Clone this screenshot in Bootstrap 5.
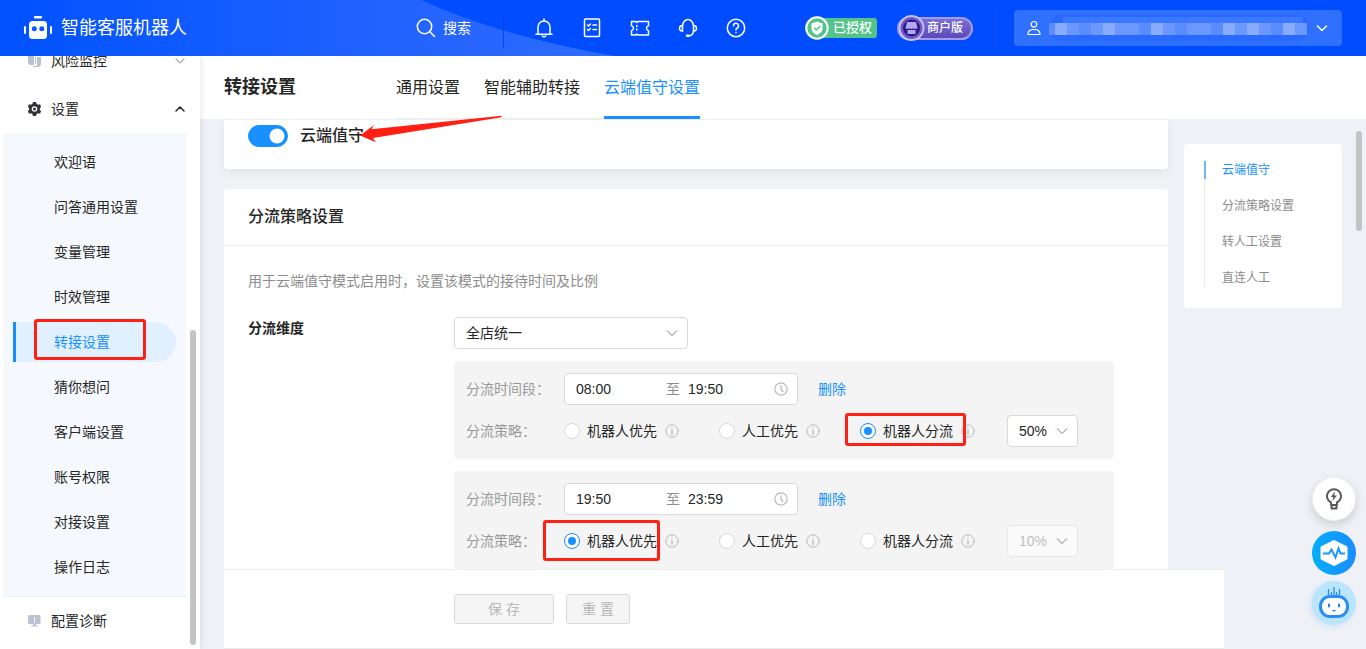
<!DOCTYPE html>
<html lang="zh-CN">
<head>
<meta charset="utf-8">
<meta name="viewport" content="width=device-width, initial-scale=1">
<title>智能客服机器人 - 转接设置</title>
<link href="https://cdn.jsdelivr.net/npm/bootstrap@5.3.0/dist/css/bootstrap.min.css" rel="stylesheet">
<style>
  :root { --brand: #1890ff; --callout: #ff2013; --ink: #262626; --mute: #999; }
  body { font-family: "Liberation Sans", "Noto Sans CJK SC", sans-serif; font-size: 14px; line-height: 20px; color: var(--ink); background: #eff1f6; }
  a { color: var(--brand); text-decoration: none; }
  svg { display: block; flex: none; }
  .line-icon { fill: none; stroke: currentColor; stroke-width: 1.5; stroke-linecap: round; stroke-linejoin: round; }
  .icon-thin { stroke-width: 1.2; }

  /* top bar */
  .topbar { height: 56px; background: #004dff; color: #fff; }
  .topbar-art { left: 0; top: 0; z-index: 0; }
  .topbar > * { z-index: 1; }
  .brand-link { gap: 9px; }
  .brand-name { font-size: 18px; line-height: 24px; color: #fff; }
  .tool-btn { width: 48px; height: 40px; color: #fff; }
  .tools { width: 282px; border-left: 1px solid #0a46e4; border-right: 1px solid #0a46e4; height: 40px; padding-left: 16px; }
  .search-btn { width: 87px; gap: 7px; font-size: 14px; color: #fff; }
  .badges { width: 209px; height: 40px; padding-left: 20px; border-right: 1px solid #0a46e4; }
  .tag { height: 20px; font-size: 13px; font-weight: 500; padding-left: 28px; color: #fff; }
  .tag svg { left: 0; top: 50%; transform: translateY(-50%); }
  .tag-ok { width: 72px; background: #52c48a; border-radius: 12px 4px 4px 12px; }
  .tag-shop { width: 76px; height: 23px; padding-left: 28px; background: linear-gradient(#7b6fd6, #5b4ab8); border: 2px solid #a79ae8; border-radius: 12px; font-size: 12px; }
  .account { width: 328px; height: 36px; background: #2f70ff; border-radius: 4px; color: #fff; padding: 0 14px 0 12px; margin: 0 24px 0 20px; }

  /* side menu */
  .sidebar { width: 200px; background: #fff; box-shadow: 2px 0 6px rgba(0,21,41,.08); z-index: 2; }
  .side-row { height: 48px; padding: 0 14px 0 28px; gap: 10px; color: var(--ink); }
  .side-row .chev-off { color: #b0b0b0; }
  .submenu { margin: 0 14px 0 3px; padding: 9px 10px; background: #f5f9fd; border-bottom: 1px solid #e6eefb; gap: 5px; }
  .submenu a { height: 40px; padding-left: 38px; border-left: 3px solid transparent; color: var(--ink); }
  .submenu a.active { background: #e1f0ff; border-left-color: var(--brand); border-radius: 0 20px 20px 0; color: var(--brand); }
  .thumb { width: 6px; border-radius: 3px; background: #c4c4c4; }
  .thumb-side { right: 4px; top: 274px; bottom: 4px; }
  .thumb-main { right: 4px; top: 75px; height: 100px; }

  /* page head */
  .page-head { height: 63px; background: #fff; padding: 0 24px; z-index: 1; }
  .page-head h1 { width: 172px; font-size: 18px; line-height: 62px; font-weight: 700; }
  .tabs { gap: 24px; box-shadow: inset 0 -1px #ececec; }
  .tabs a { padding-top: 4px; font-size: 16px; line-height: 56px; border-bottom: 3px solid transparent; color: var(--ink); }
  .tabs a.active { color: var(--brand); border-color: var(--brand); }

  /* content */
  .stack { gap: 20px; background: #f1f2f4; }
  .panel { background: #fff; border-radius: 4px; }
  .panel-first { border-top: 1px solid #eceef2; border-radius: 0 0 4px 4px; padding: 4px 24px 21px; box-shadow: 0 4px 10px rgba(0,0,0,.06); }
  .panel-title { font-size: 16px; line-height: 24px; font-weight: 500; }
  .panel-top { padding: 16px 24px; border-bottom: 1px solid #ececec; }
  .panel-main { padding: 25px 24px 24px; }
  .hint { margin: 0 0 26px; color: #8c8c8c; }
  .form-check-input { box-shadow: none !important; flex: none; }
  .switch { width: 40px !important; height: 22px; }
  .switch:checked { background-color: var(--brand); border-color: var(--brand); }
  .label-col { width: 206px; font-weight: 700; line-height: 22px; flex: none; }
  .rules { max-width: 660px; gap: 12px; }
  .rule { background: #f4f4f4; border-radius: 4px; padding: 12px; gap: 10px; }
  .rule-label { width: 98px; color: var(--mute); flex: none; }
  .pick { height: 32px; font-size: 14px; line-height: 20px; padding: 0 30px 0 11px; border-color: #d9d9d9; border-radius: 4px; color: var(--ink);
    background-size: 12px; background-position: right 9px center;
    background-image: url("data:image/svg+xml,%3csvg xmlns='http://www.w3.org/2000/svg' viewBox='0 0 12 12'%3e%3cpath fill='none' stroke='%23b8b8b8' stroke-width='1.3' d='M1 3.5l5 5 5-5'/%3e%3c/svg%3e"); }
  .pick:disabled { background-color: #fafafa; border-color: #e8e8e8; color: #bfbfbf; opacity: 1; }
  .pick-wide, .range { width: 234px; }
  .pick-rate { width: 71px; }
  .range { height: 32px; background: #fff; border: 1px solid #d9d9d9; border-radius: 4px; padding: 0 9px 0 11px; margin-right: 20px; color: #b8b8b8; }
  .range input { width: 90px; border: 0; padding: 0; outline: 0; color: var(--ink); background: none; }
  .range span { width: 22px; color: #8c8c8c; }
  .range input + span + input { width: 86px; }
  .choice { gap: 7px; margin-right: 40px; }
  .choice + .choice + .choice { margin-right: 32px; }
  .choice .form-check-input { width: 16px; height: 16px; border-color: #d9d9d9; background-color: #fff; }
  .choice .form-check-input:checked { border-color: var(--brand);
    background-image: url("data:image/svg+xml,%3csvg xmlns='http://www.w3.org/2000/svg' viewBox='0 0 14 14'%3e%3ccircle cx='7' cy='7' r='4' fill='%231890ff'/%3e%3c/svg%3e"); }
  .info { color: #b8b8b8; margin-left: 1px; }

  /* jump list */
  .jump { width: 158px; margin-top: 25px; padding: 17px 20px 21px; font-size: 12px; line-height: 18px; }
  .jump ul { gap: 18px; border-left: 1px solid #e8e8e8; }
  .jump a { display: block; padding-left: 17px; color: #8c8c8c; }
  .jump a.active { color: var(--brand); box-shadow: -1px 0 #6cb8ff, inset 1px 0 #6cb8ff; }

  /* action bar */
  .actions { height: 80px; margin: 0 142px 0 24px; padding-left: 230px; background: #fff; border-top: 1px solid #ececec; border-bottom: 1px solid #ececec; gap: 12px; }
  .act { height: 30px; width: 64px; padding: 0; font-size: 14px; line-height: 20px; border-radius: 3px; }
  .act:disabled { background: #f5f5f5; border-color: #d9d9d9; color: #b8b8b8; opacity: 1; }
  .act-save { width: 100px; }

  /* floating helpers */
  .helpers { right: 10px; bottom: 24px; gap: 6px; z-index: 4; }
  .helper { width: 44px; height: 44px; border: 0; padding: 0; }
  .helper-tip { background: #fff; color: #595959; border: 1px solid #eee; box-shadow: 0 4px 10px rgba(0,0,0,.15); margin-bottom: 4px; }
  .helper-pulse { background: linear-gradient(90deg, #03aefb, #1b8cff); }
  .helper-bot { background: #b9e5ff; box-shadow: -2px 2px 6px rgba(24,144,255,.15); }

  /* red callouts */
  .callout { border: 3px solid var(--callout); border-radius: 3px; pointer-events: none; z-index: 3; }
  .callout-menu { left: 18px; top: -3px; width: 112px; height: 41px; }
  .callout-split { left: -15px; top: -8px; width: 121px; height: 33px; }
  .callout-robot { left: -21px; top: -11px; width: 117px; height: 41px; }
  .arrow { left: 160px; top: 59px; z-index: 3; }
</style>
</head>
<body class="vh-100 d-flex flex-column overflow-hidden">

<header class="topbar position-relative d-flex align-items-center flex-shrink-0">
  <svg class="topbar-art position-absolute" width="620" height="56" aria-hidden="true">
    <defs><linearGradient id="sweep"><stop offset="0" stop-color="#0052ff"/><stop offset=".65" stop-color="#2263ff"/><stop offset="1" stop-color="#2e6cff"/></linearGradient></defs>
    <path d="M0 0H421Q503 37 614 56H0Z" fill="url(#sweep)"/>
  </svg>
  <a href="#" class="brand-link position-relative d-flex align-items-center flex-grow-1 ps-4">
    <svg width="28" height="24" viewBox="0 0 28 24" fill="#fff"><rect x="10" y="0" width="8" height="2.4" rx="1"/><rect x="5" y="5" width="18" height="18" rx="3.5"/><rect x="0" y="10" width="2" height="8" rx="1"/><rect x="26" y="10" width="2" height="8" rx="1"/><circle cx="10.3" cy="12.7" r="2.5" fill="#0d57ff"/><circle cx="17.8" cy="12.7" r="2.5" fill="#0d57ff"/></svg>
    <span class="brand-name">智能客服机器人</span>
  </a>
  <button class="search-btn btn border-0 p-0 position-relative d-flex align-items-center" type="button">
    <svg class="line-icon" width="20" height="20" viewBox="0 0 20 20"><circle cx="8.5" cy="8.5" r="7.2"/><path d="M14 14l4.500 4.500"/></svg>搜索
  </button>
  <div class="tools position-relative d-flex align-items-center">
    <button class="tool-btn btn border-0 p-0 d-flex align-items-center justify-content-center" type="button" aria-label="通知"><svg class="line-icon" width="20" height="20" viewBox="0 0 20 20"><path d="M4 16V9a6 6 0 0 1 12 0v7M2 16.3h16M10 1v1.5M8.3 18q1.7 1.4 3.4 0"/></svg></button>
    <button class="tool-btn btn border-0 p-0 d-flex align-items-center justify-content-center" type="button" aria-label="任务"><svg class="line-icon" width="20" height="20" viewBox="0 0 20 20"><rect x="2.500" y="1" width="15" height="17.500" rx="1"/><path d="M5.500 7l1 1 2-2M5.500 11.500l1 1 2-2M11 7h3.500M11 11.500h3.500"/></svg></button>
    <button class="tool-btn btn border-0 p-0 d-flex align-items-center justify-content-center" type="button" aria-label="卡券"><svg class="line-icon" width="20" height="20" viewBox="0 0 20 20"><path d="M1.500 3.500h4.300l1 1 1-1h10.700v4.200q-2 .5-2 2.500t2 2.500v4.300H7.800l-1-1-1 1H1.500v-4.300q2-.5 2-2.500t-2-2.500z"/><path stroke-dasharray="1 2.500" d="M6.800 7.500v6.500"/></svg></button>
    <button class="tool-btn btn border-0 p-0 d-flex align-items-center justify-content-center" type="button" aria-label="客服"><svg class="line-icon" width="20" height="20" viewBox="0 0 20 20"><path d="M4.500 13V8a5.500 6.500 0 0 1 11 0v5c0 2.500-2 4.500-4.500 4.800"/><path d="M4.500 7.500Q1.500 7.500 1.500 10.300T4.500 13M15.500 7.500q3 0 3 2.800t-3 2.700"/><path stroke-width="2.400" d="M9 17.800h1.500"/></svg></button>
    <button class="tool-btn btn border-0 p-0 d-flex align-items-center justify-content-center" type="button" aria-label="帮助"><svg class="line-icon" width="20" height="20" viewBox="0 0 20 20"><circle cx="10" cy="10" r="8.700"/><path d="M7.500 7.800a2.500 2.500 0 1 1 3.700 2.200q-1.200.7-1.200 2M10 14.600v.2"/></svg></button>
  </div>
  <div class="badges position-relative d-flex align-items-center">
    <span class="tag tag-ok position-relative d-flex align-items-center me-3">
      <svg class="position-absolute" width="24" height="24" viewBox="0 0 24 24"><circle cx="12" cy="12" r="10.700" fill="#52c48a" stroke="#fff" stroke-width="2"/><path d="M12 5.500l5.500 2v5q0 4-5.500 6.500-5.500-2.500-5.500-6.500v-5z" fill="#fff"/><path d="M9 11.800l2.200 2.200 4-4" fill="none" stroke="#52c48a" stroke-width="1.500"/></svg>已授权
    </span>
    <span class="tag tag-shop position-relative d-flex align-items-center ms-1">
      <svg class="position-absolute" width="28" height="28" viewBox="0 0 28 28"><circle cx="12.500" cy="14" r="12" fill="#6b58c9" stroke="#c9c0f5" stroke-width="2"/><circle cx="12.500" cy="14" r="8.500" fill="#2c1a85"/><path d="M8 8h9l1.500 6q-1 1.700-2.300.3-1.200 1.500-2.400 0-1.300 1.500-2.600 0-1.200 1.500-2.400 0-1.300 1.400-2.300-.3zM8.500 16h8v4h-8z" fill="#b5a8f2"/></svg>商户版
    </span>
  </div>
  <button class="account btn border-0 position-relative d-flex align-items-center justify-content-between" type="button" aria-label="账号">
    <svg class="line-icon icon-thin" width="16" height="16" viewBox="0 0 16 16"><circle cx="8" cy="4.300" r="2.800"/><path d="M2 14.500q-.3-5 6-5t6 5z"/></svg>
    <svg width="260" height="28" viewBox="0 0 260 28" aria-hidden="true">
      <rect x="0" y="1" width="260" height="26" rx="13" fill="#2869ff"/><rect x="14" y="3" width="240" height="6" fill="#3b77ff"/>
      <g><rect x="0" y="9" width="258" height="12" fill="#6a98ff"/><path fill="#88acff" d="M6 9h12v12H6zM54 9h12v12H54zM102 9h12v12h-12zM174 9h12v12h-12zM198 9h12v12h-12zM234 9h12v12h-12z"/><path fill="#5a8cff" d="M0 9h6v12H0zM30 9h12v12H30zM90 9h12v12H90zM126 9h12v12h-12zM162 9h12v12h-12zM222 9h12v12h-12z"/></g>
    </svg>
    <svg class="line-icon" width="12" height="12" viewBox="0 0 12 12"><path d="M1.500 4L6 8.500 10.500 4"/></svg>
  </button>
</header>

<div class="d-flex flex-grow-1 overflow-hidden">
  <nav class="sidebar position-relative d-flex flex-column justify-content-end flex-shrink-0 overflow-hidden pb-1" aria-label="主菜单">
    <a href="#" class="side-row d-flex align-items-center flex-shrink-0">
      <svg width="13" height="14" viewBox="0 0 13 14"><path fill="#b9c2d1" d="M0 1h6v10H2L0 9zM7 3h1v7H7zM9 3h4v8l-2 2H5v-1h4z"/></svg>
      <span>风险监控</span>
      <svg class="line-icon icon-thin chev-off ms-auto" width="12" height="12" viewBox="0 0 12 12"><path d="M2 4l4 4 4-4"/></svg>
    </a>
    <a href="#" class="side-row d-flex align-items-center flex-shrink-0">
      <svg width="13" height="14" viewBox="0 0 13 14"><path fill="#303238" fill-rule="evenodd" d="M5 0h3l.6 2 1.500.8 2-.5L13 5l-1.200 1.400v1.200L13 9l-.9 2.700-2-.5-1.500.8L8 14H5l-.6-2-1.500-.8-2 .5L0 9l1.200-1.400V6.400L0 5l.9-2.700 2 .5L4.400 2zM6.500 4.200a2.800 2.800 0 1 0 0 5.600 2.800 2.800 0 0 0 0-5.600zm0 1.300a1.500 1.500 0 1 1 0 3 1.500 1.500 0 0 1 0-3z"/></svg>
      <span class="open-group">设置</span>
      <svg class="line-icon ms-auto" width="12" height="12" viewBox="0 0 12 12"><path d="M2 8l4-4 4 4"/></svg>
    </a>
    <div class="submenu d-flex flex-column flex-shrink-0">
      <a href="#" class="d-flex align-items-center">欢迎语</a>
      <a href="#" class="d-flex align-items-center">问答通用设置</a>
      <a href="#" class="d-flex align-items-center">变量管理</a>
      <a href="#" class="d-flex align-items-center">时效管理</a>
      <a href="#" class="active d-flex align-items-center position-relative">转接设置<span class="callout callout-menu position-absolute"></span></a>
      <a href="#" class="d-flex align-items-center">猜你想问</a>
      <a href="#" class="d-flex align-items-center">客户端设置</a>
      <a href="#" class="d-flex align-items-center">账号权限</a>
      <a href="#" class="d-flex align-items-center">对接设置</a>
      <a href="#" class="d-flex align-items-center">操作日志</a>
    </div>
    <a href="#" class="side-row d-flex align-items-center flex-shrink-0">
      <svg width="13" height="14" viewBox="0 0 13 14"><path fill="#b9c2d1" d="M1.500 1h9.500q1.500 0 1.500 1.500v6q0 1.500-1.500 1.500H8v1.500h2v1H3v-1h2V10H1.500Q0 10 0 8.500v-6Q0 1 1.500 1z"/><path stroke="#fff" d="M6.500 3v3.500M6.500 7.500v1.200"/></svg>
      <span>配置诊断</span>
    </a>
    <span class="thumb thumb-side position-absolute"></span>
  </nav>

  <main class="position-relative d-flex flex-column flex-grow-1 overflow-hidden">
    <div class="page-head d-flex flex-shrink-0">
      <h1 class="m-0">转接设置</h1>
      <nav class="tabs d-flex" aria-label="设置分类">
        <a href="#">通用设置</a>
        <a href="#">智能辅助转接</a>
        <a href="#" class="active">云端值守设置</a>
      </nav>
    </div>

    <div class="d-flex flex-grow-1 overflow-hidden align-items-start gap-3 px-4">
      <div class="stack d-flex flex-column flex-grow-1">
        <section class="panel panel-first">
          <div class="form-switch p-0 d-flex align-items-center">
            <input class="form-check-input switch m-0" type="checkbox" role="switch" id="cloud" checked>
            <label class="panel-title ms-2 ps-1" for="cloud">云端值守</label>
          </div>
        </section>
        <section class="panel" id="split">
          <div class="panel-top"><h2 class="panel-title m-0">分流策略设置</h2></div>
          <div class="panel-main">
            <p class="hint">用于云端值守模式启用时，设置该模式的接待时间及比例</p>
            <div class="d-flex">
              <label class="label-col" for="dim">分流维度</label>
              <div class="rules flex-grow-1 d-flex flex-column">
                <select class="form-select pick pick-wide" id="dim"><option>全店统一</option></select>

                <div class="rule d-flex flex-column">
                  <div class="d-flex align-items-center">
                    <label class="rule-label" for="from1">分流时间段：</label>
                    <div class="range d-flex align-items-center">
                      <input id="from1" type="text" value="08:00"><span>至</span><input type="text" value="19:50" aria-label="结束时间">
                      <svg class="line-icon icon-thin" width="14" height="14" viewBox="0 0 14 14"><circle cx="7" cy="7" r="6.200"/><path d="M7 3.500V7.500l2 2"/></svg>
                    </div>
                    <a href="#">删除</a>
                  </div>
                  <div class="d-flex align-items-center">
                    <span class="rule-label">分流策略：</span>
                    <div class="choice d-flex align-items-center"><input class="form-check-input m-0" type="radio" name="p1" id="p1a"><label for="p1a">机器人优先</label><svg class="line-icon info" width="14" height="14" viewBox="0 0 14 14"><circle cx="7" cy="7" r="6.200" stroke-width="1"/><path d="M7 6.300v4M7 3.800v.3" stroke-width="1.300"/></svg></div>
                    <div class="choice d-flex align-items-center"><input class="form-check-input m-0" type="radio" name="p1" id="p1b"><label for="p1b">人工优先</label><svg class="line-icon info" width="14" height="14" viewBox="0 0 14 14"><circle cx="7" cy="7" r="6.200" stroke-width="1"/><path d="M7 6.300v4M7 3.800v.3" stroke-width="1.300"/></svg></div>
                    <div class="choice d-flex align-items-center position-relative"><input class="form-check-input m-0" type="radio" name="p1" id="p1c" checked><label for="p1c">机器人分流</label><svg class="line-icon info" width="14" height="14" viewBox="0 0 14 14"><circle cx="7" cy="7" r="6.200" stroke-width="1"/><path d="M7 6.300v4M7 3.800v.3" stroke-width="1.300"/></svg><span class="callout callout-split position-absolute"></span></div>
                    <select class="form-select pick pick-rate" aria-label="分流比例"><option>50%</option></select>
                  </div>
                </div>

                <div class="rule d-flex flex-column">
                  <div class="d-flex align-items-center">
                    <label class="rule-label" for="from2">分流时间段：</label>
                    <div class="range d-flex align-items-center">
                      <input id="from2" type="text" value="19:50"><span>至</span><input type="text" value="23:59" aria-label="结束时间">
                      <svg class="line-icon icon-thin" width="14" height="14" viewBox="0 0 14 14"><circle cx="7" cy="7" r="6.200"/><path d="M7 3.500V7.500l2 2"/></svg>
                    </div>
                    <a href="#">删除</a>
                  </div>
                  <div class="d-flex align-items-center">
                    <span class="rule-label">分流策略：</span>
                    <div class="choice d-flex align-items-center position-relative"><input class="form-check-input m-0" type="radio" name="p2" id="p2a" checked><label for="p2a">机器人优先</label><svg class="line-icon info" width="14" height="14" viewBox="0 0 14 14"><circle cx="7" cy="7" r="6.200" stroke-width="1"/><path d="M7 6.300v4M7 3.800v.3" stroke-width="1.300"/></svg><span class="callout callout-robot position-absolute"></span></div>
                    <div class="choice d-flex align-items-center"><input class="form-check-input m-0" type="radio" name="p2" id="p2b"><label for="p2b">人工优先</label><svg class="line-icon info" width="14" height="14" viewBox="0 0 14 14"><circle cx="7" cy="7" r="6.200" stroke-width="1"/><path d="M7 6.300v4M7 3.800v.3" stroke-width="1.300"/></svg></div>
                    <div class="choice d-flex align-items-center"><input class="form-check-input m-0" type="radio" name="p2" id="p2c"><label for="p2c">机器人分流</label><svg class="line-icon info" width="14" height="14" viewBox="0 0 14 14"><circle cx="7" cy="7" r="6.200" stroke-width="1"/><path d="M7 6.300v4M7 3.800v.3" stroke-width="1.300"/></svg></div>
                    <select class="form-select pick pick-rate" aria-label="分流比例" disabled><option>10%</option></select>
                  </div>
                </div>
              </div>
            </div>
          </div>
        </section>
      </div>

      <aside class="panel jump flex-shrink-0">
        <ul class="list-unstyled d-flex flex-column m-0">
          <li><a href="#cloud" class="active">云端值守</a></li>
          <li><a href="#split">分流策略设置</a></li>
          <li><a href="#manual">转人工设置</a></li>
          <li><a href="#direct">直连人工</a></li>
        </ul>
      </aside>
    </div>

    <div class="actions d-flex align-items-center flex-shrink-0">
      <button class="btn act act-save" type="button" disabled>保 存</button>
      <button class="btn act" type="button" disabled>重 置</button>
    </div>

    <svg class="arrow position-absolute" width="143" height="28" viewBox="0 0 143 28" aria-hidden="true"><path fill="#ff2013" d="M0 20.500L14 10l-2.500 4.200L141.500.8v1.500L13 23l3 4.300z"/></svg>
    <span class="thumb thumb-main position-absolute"></span>
  </main>
</div>

<div class="helpers position-fixed d-flex flex-column">
  <button class="helper helper-tip rounded-circle d-flex align-items-center justify-content-center" type="button" aria-label="建议"><svg class="line-icon" width="16" height="22" viewBox="0 0 16 22"><path stroke-width="2" d="M5 17v-2.500a7 7 0 1 1 6 0V17zM5.500 17v3.500h5V17"/><path fill="currentColor" stroke="none" d="M9 3.500L4.800 9h2.500l-.8 4 4.500-5.500H8.300z"/></svg></button>
  <button class="helper helper-pulse rounded-circle d-flex align-items-center justify-content-center" type="button" aria-label="诊断"><svg width="28" height="28" viewBox="0 0 28 28"><path fill="#fff" stroke="#fff" stroke-width="3" stroke-linejoin="round" d="M14 2.500l12 6v11l-12 6-12-6v-11z"/><path fill="none" stroke="#1a96fd" stroke-width="2" d="M3 14.500h6l2.500-4 4 8 3-9 2 5H25"/></svg></button>
  <button class="helper helper-bot rounded-circle d-flex align-items-center justify-content-center" type="button" aria-label="智能助手"><svg width="32" height="34" viewBox="0 0 32 34"><path stroke="#2a8df5" stroke-width="1.300" d="M10.500 3v6M13.500 6v3M16 1v8M18.500 6v3M21.500 3v6"/><rect x="2.500" y="10.500" width="27" height="20" rx="9.500" fill="#fff" stroke="#2a8df5" stroke-width="3"/><path stroke="#1f7cf0" stroke-width="2" stroke-linecap="round" d="M11 18.500v2M21 18.500v2"/><path fill="#1f7cf0" d="M14 24h4q-2 3-4 0z"/></svg></button>
</div>

<script src="https://cdn.jsdelivr.net/npm/bootstrap@5.3.0/dist/js/bootstrap.bundle.min.js"></script>
</body>
</html>
